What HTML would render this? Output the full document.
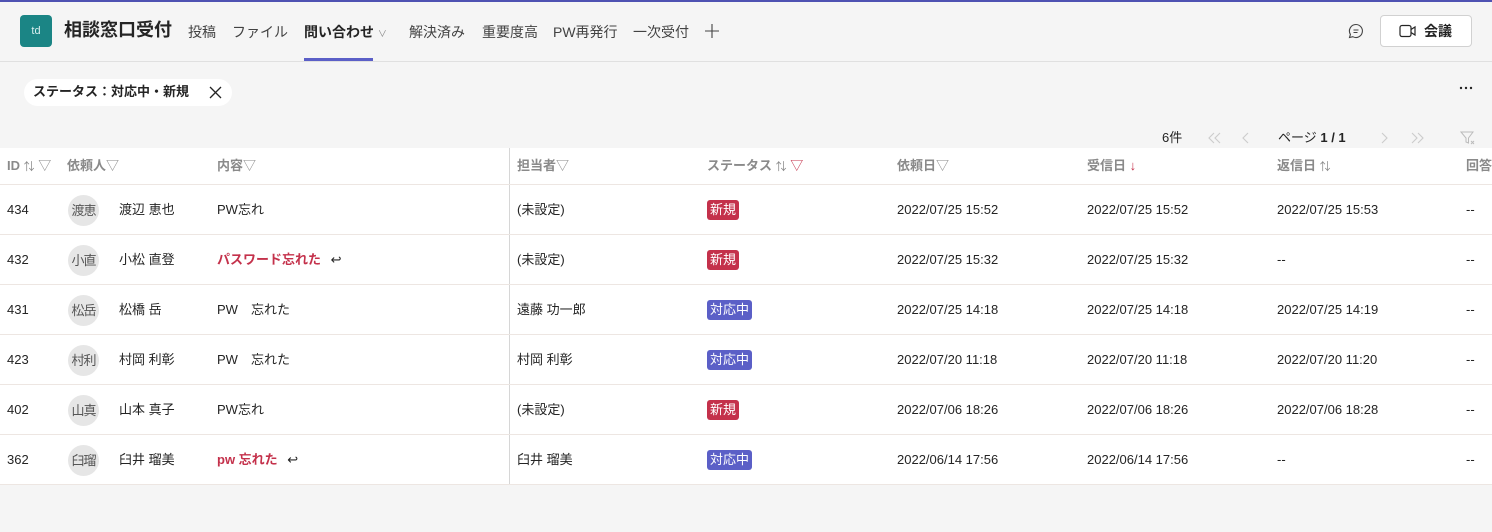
<!DOCTYPE html>
<html><head><meta charset="utf-8"><style>
*{box-sizing:border-box;margin:0;padding:0}
body{width:1492px;height:532px;background:#f5f5f5;font-family:"Liberation Sans","Noto Sans CJK JP",sans-serif;color:#242424;position:relative;overflow:hidden;font-size:13px;line-height:16px}
.a{position:absolute;white-space:nowrap}
.tab{top:23px;font-size:14px;line-height:18px;color:#424242}
.hd{top:158px;font-size:13px;font-weight:bold;color:#8a8a8a}
.row{position:absolute;left:0;width:1492px;height:50px;border-bottom:1px solid #ede6e2}
.row .a{top:17px}
.av{position:absolute;left:68px;top:10px;width:31px;height:31px;border-radius:50%;background:#e6e6e6;color:#555;font-size:13px;text-align:center;line-height:31px;letter-spacing:-1px}
.b{position:absolute;left:707px;top:15px;height:20px;padding:0 3px;border-radius:3px;color:#fff;font-size:13px;line-height:20px}
.n{background:#c4314b}.t{background:#5b5fc7}
.red{color:#c4314b;font-weight:bold}
</style></head><body>
<div class="a" style="left:0;top:0;width:1492px;height:2px;background:#4f52b2"></div>
<div class="a" style="left:0;top:61px;width:1492px;height:1px;background:#e0e0e0"></div>
<div class="a" style="left:20px;top:15px;width:32px;height:32px;border-radius:4px;background:#1b8585;color:#d8eeee;font-size:11px;text-align:center;line-height:32px">td</div>
<div class="a" style="left:64px;top:18px;font-size:18px;line-height:24px;font-weight:bold">相談窓口受付</div>
<div class="a tab" style="left:188px">投稿</div>
<div class="a tab" style="left:232px">ファイル</div>
<div class="a tab" style="left:304px;font-weight:bold;color:#242424">問い合わせ <span style="font-size:9px;color:#888;font-weight:normal">∨</span></div>
<div class="a" style="left:304px;top:58px;width:69px;height:3px;background:#5b5fc7"></div>
<div class="a tab" style="left:409px">解決済み</div>
<div class="a tab" style="left:482px">重要度高</div>
<div class="a tab" style="left:553px">PW再発行</div>
<div class="a tab" style="left:633px">一次受付</div>
<svg class="a" style="left:704px;top:23px" width="16" height="16" viewBox="0 0 16 16"><path d="M8 1v14M1 8h14" stroke="#424242" stroke-width="1.1"/></svg>
<svg class="a" style="left:1347px;top:22px" width="18" height="18" viewBox="0 0 18 18"><path d="M9 2.5a6.5 6.5 0 1 1-3.2 12.2L2.5 15.5l.9-3.1A6.5 6.5 0 0 1 9 2.5z" fill="none" stroke="#424242" stroke-width="1.1"/><path d="M6.5 8h5M6.5 10.5h4" stroke="#424242" stroke-width="1.1"/></svg>
<div class="a" style="left:1380px;top:15px;width:92px;height:32px;border:1px solid #d1d1d1;border-radius:4px;background:#fff"></div>
<svg class="a" style="left:1399px;top:24px" width="20" height="14" viewBox="0 0 20 14"><rect x="1" y="1.5" width="11" height="11" rx="2" fill="none" stroke="#242424" stroke-width="1.2"/><path d="M12 5.5l4-2.5v8l-4-2.5" fill="none" stroke="#242424" stroke-width="1.2"/></svg>
<div class="a" style="left:1424px;top:22px;font-size:14px;line-height:18px;font-weight:bold">会議</div>
<div class="a" style="left:24px;top:79px;width:208px;height:27px;border-radius:14px;background:#fff"></div>
<div class="a" style="left:33px;top:84px;font-size:13px;font-weight:bold">ステータス：対応中・新規</div>
<svg class="a" style="left:209px;top:86px" width="13" height="13" viewBox="0 0 13 13"><path d="M1 1l11 11M12 1L1 12" stroke="#242424" stroke-width="1.3"/></svg>
<svg class="a" style="left:1459px;top:86px" width="14" height="4" viewBox="0 0 14 4"><circle cx="2" cy="2" r="1.2" fill="#242424"/><circle cx="7" cy="2" r="1.2" fill="#242424"/><circle cx="12" cy="2" r="1.2" fill="#242424"/></svg>
<div class="a" style="left:1162px;top:130px">6件</div>
<svg class="a" style="left:1208px;top:132px" width="14" height="12" viewBox="0 0 14 12"><path d="M6 1L1 6l5 5M12 1L7 6l5 5" fill="none" stroke="#ccc" stroke-width="1.1"/></svg>
<svg class="a" style="left:1242px;top:132px" width="8" height="12" viewBox="0 0 8 12"><path d="M6 1L1 6l5 5" fill="none" stroke="#ccc" stroke-width="1.1"/></svg>
<div class="a" style="left:1278px;top:130px">ページ <b>1 / 1</b></div>
<svg class="a" style="left:1381px;top:132px" width="8" height="12" viewBox="0 0 8 12"><path d="M1 1l5 5-5 5" fill="none" stroke="#ccc" stroke-width="1.1"/></svg>
<svg class="a" style="left:1410px;top:132px" width="14" height="12" viewBox="0 0 14 12"><path d="M2 1l5 5-5 5M8 1l5 5-5 5" fill="none" stroke="#ccc" stroke-width="1.1"/></svg>
<svg class="a" style="left:1460px;top:131px" width="16" height="14" viewBox="0 0 16 14"><path d="M1 1h12L8.5 7v5L6 11V7z" fill="none" stroke="#bbb"/><path d="M11 10l3 3M14 10l-3 3" stroke="#bbb"/></svg>
<div class="a" style="left:0;top:148px;width:1492px;height:337px;background:#fff"></div>
<div class="a" style="left:509px;top:148px;width:1px;height:337px;background:#d6d6d6"></div>
<div class="a" style="left:0;top:184px;width:1492px;height:1px;background:#ede6e2"></div>
<div class="a hd" style="left:7px">ID <span style="font-weight:normal;font-size:11px">⇅</span> <span style="font-weight:normal">▽</span></div>
<div class="a hd" style="left:67px">依頼人<span style="font-weight:normal">▽</span></div>
<div class="a hd" style="left:217px">内容<span style="font-weight:normal">▽</span></div>
<div class="a hd" style="left:517px">担当者<span style="font-weight:normal">▽</span></div>
<div class="a hd" style="left:707px">ステータス <span style="font-weight:normal;font-size:11px">⇅</span> <span style="font-weight:normal;color:#c4314b">▽</span></div>
<div class="a hd" style="left:897px">依頼日<span style="font-weight:normal">▽</span></div>
<div class="a hd" style="left:1087px">受信日 <span style="font-weight:normal;color:#c4314b">↓</span></div>
<div class="a hd" style="left:1277px">返信日 <span style="font-weight:normal;font-size:11px">⇅</span></div>
<div class="a hd" style="left:1466px">回答</div>

<div class="row" style="top:185px"><div class="a" style="left:7px">434</div><div class="av">渡恵</div><div class="a" style="left:119px">渡辺 恵也</div><div class="a" style="left:217px">PW忘れ</div><div class="a" style="left:517px">(未設定)</div><div class="b n">新規</div><div class="a" style="left:897px">2022/07/25 15:52</div><div class="a" style="left:1087px">2022/07/25 15:52</div><div class="a" style="left:1277px">2022/07/25 15:53</div><div class="a" style="left:1466px">--</div></div>
<div class="row" style="top:235px"><div class="a" style="left:7px">432</div><div class="av">小直</div><div class="a" style="left:119px">小松 直登</div><div class="a red" style="left:217px">パスワード忘れた <span style="color:#242424;font-weight:normal;margin-left:6px">↩</span></div><div class="a" style="left:517px">(未設定)</div><div class="b n">新規</div><div class="a" style="left:897px">2022/07/25 15:32</div><div class="a" style="left:1087px">2022/07/25 15:32</div><div class="a" style="left:1277px">--</div><div class="a" style="left:1466px">--</div></div>
<div class="row" style="top:285px"><div class="a" style="left:7px">431</div><div class="av">松岳</div><div class="a" style="left:119px">松橋 岳</div><div class="a" style="left:217px">PW　忘れた</div><div class="a" style="left:517px">遠藤 功一郎</div><div class="b t">対応中</div><div class="a" style="left:897px">2022/07/25 14:18</div><div class="a" style="left:1087px">2022/07/25 14:18</div><div class="a" style="left:1277px">2022/07/25 14:19</div><div class="a" style="left:1466px">--</div></div>
<div class="row" style="top:335px"><div class="a" style="left:7px">423</div><div class="av">村利</div><div class="a" style="left:119px">村岡 利彰</div><div class="a" style="left:217px">PW　忘れた</div><div class="a" style="left:517px">村岡 利彰</div><div class="b t">対応中</div><div class="a" style="left:897px">2022/07/20 11:18</div><div class="a" style="left:1087px">2022/07/20 11:18</div><div class="a" style="left:1277px">2022/07/20 11:20</div><div class="a" style="left:1466px">--</div></div>
<div class="row" style="top:385px"><div class="a" style="left:7px">402</div><div class="av">山真</div><div class="a" style="left:119px">山本 真子</div><div class="a" style="left:217px">PW忘れ</div><div class="a" style="left:517px">(未設定)</div><div class="b n">新規</div><div class="a" style="left:897px">2022/07/06 18:26</div><div class="a" style="left:1087px">2022/07/06 18:26</div><div class="a" style="left:1277px">2022/07/06 18:28</div><div class="a" style="left:1466px">--</div></div>
<div class="row" style="top:435px"><div class="a" style="left:7px">362</div><div class="av">臼瑠</div><div class="a" style="left:119px">臼井 瑠美</div><div class="a red" style="left:217px">pw 忘れた <span style="color:#242424;font-weight:normal;margin-left:6px">↩</span></div><div class="a" style="left:517px">臼井 瑠美</div><div class="b t">対応中</div><div class="a" style="left:897px">2022/06/14 17:56</div><div class="a" style="left:1087px">2022/06/14 17:56</div><div class="a" style="left:1277px">--</div><div class="a" style="left:1466px">--</div></div>
</body></html>
